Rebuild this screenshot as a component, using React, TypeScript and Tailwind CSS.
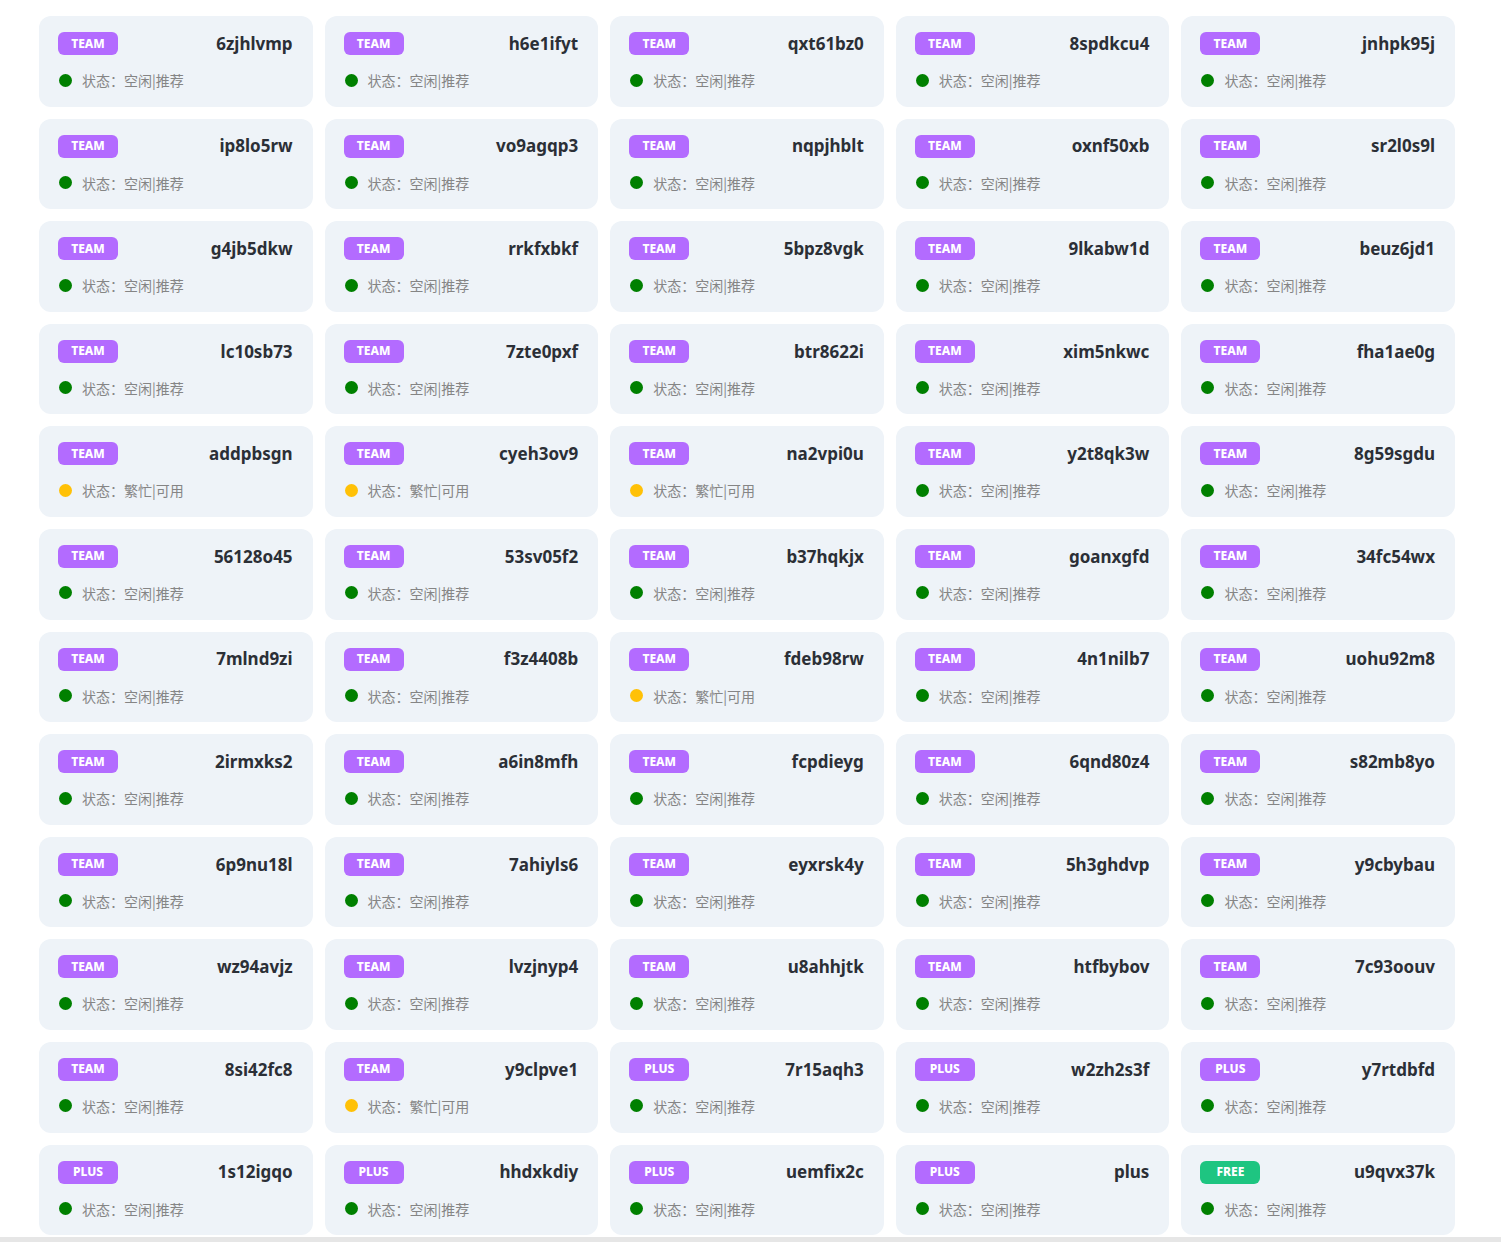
import React from "react";

type Plan = "TEAM" | "PLUS" | "FREE";

interface Account {
  id: string;
  plan: Plan;
  busy?: boolean;
}

const rows: [string, Plan, boolean?][] = [
  ["6zjhlvmp", "TEAM"], ["h6e1ifyt", "TEAM"], ["qxt61bz0", "TEAM"], ["8spdkcu4", "TEAM"], ["jnhpk95j", "TEAM"],
  ["ip8lo5rw", "TEAM"], ["vo9agqp3", "TEAM"], ["nqpjhblt", "TEAM"], ["oxnf50xb", "TEAM"], ["sr2l0s9l", "TEAM"],
  ["g4jb5dkw", "TEAM"], ["rrkfxbkf", "TEAM"], ["5bpz8vgk", "TEAM"], ["9lkabw1d", "TEAM"], ["beuz6jd1", "TEAM"],
  ["lc10sb73", "TEAM"], ["7zte0pxf", "TEAM"], ["btr8622i", "TEAM"], ["xim5nkwc", "TEAM"], ["fha1ae0g", "TEAM"],
  ["addpbsgn", "TEAM", true], ["cyeh3ov9", "TEAM", true], ["na2vpi0u", "TEAM", true], ["y2t8qk3w", "TEAM"], ["8g59sgdu", "TEAM"],
  ["56128o45", "TEAM"], ["53sv05f2", "TEAM"], ["b37hqkjx", "TEAM"], ["goanxgfd", "TEAM"], ["34fc54wx", "TEAM"],
  ["7mlnd9zi", "TEAM"], ["f3z4408b", "TEAM"], ["fdeb98rw", "TEAM", true], ["4n1nilb7", "TEAM"], ["uohu92m8", "TEAM"],
  ["2irmxks2", "TEAM"], ["a6in8mfh", "TEAM"], ["fcpdieyg", "TEAM"], ["6qnd80z4", "TEAM"], ["s82mb8yo", "TEAM"],
  ["6p9nu18l", "TEAM"], ["7ahiyls6", "TEAM"], ["eyxrsk4y", "TEAM"], ["5h3ghdvp", "TEAM"], ["y9cbybau", "TEAM"],
  ["wz94avjz", "TEAM"], ["lvzjnyp4", "TEAM"], ["u8ahhjtk", "TEAM"], ["htfbybov", "TEAM"], ["7c93oouv", "TEAM"],
  ["8si42fc8", "TEAM"], ["y9clpve1", "TEAM", true], ["7r15aqh3", "PLUS"], ["w2zh2s3f", "PLUS"], ["y7rtdbfd", "PLUS"],
  ["1s12igqo", "PLUS"], ["hhdxkdiy", "PLUS"], ["uemfix2c", "PLUS"], ["plus", "PLUS"], ["u9qvx37k", "FREE"],
];

const accounts: Account[] = rows.map(([id, plan, busy]) => ({ id, plan, busy }));

function AccountCard({ account }: { account: Account }) {
  const badge = account.plan === "FREE" ? "bg-[#1ec581]" : "bg-[#b36bff]";
  return (
    <div className="h-[90.6px] rounded-xl bg-[#eef3f8] pl-[19px] pr-5 pt-4">
      <div className="flex h-[23px] items-center justify-between">
        <span
          className={`flex h-[23px] w-[60px] items-center justify-center rounded-md text-[12px] font-extrabold text-white ${badge}`}
        >
          {account.plan}
        </span>
        <span className="text-[17px] font-bold text-[#2b2f36]">{account.id}</span>
      </div>
      <div className="mt-[15px] flex items-center">
        <span
          className={`ml-px h-[13px] w-[13px] rounded-full ${account.busy ? "bg-[#ffc107]" : "bg-[#008000]"}`}
        />
        <span
          className="ml-[10px] text-[14px] leading-5 text-[#858585]"
          style={{ fontFamily: '"Noto Sans CJK SC", sans-serif' }}
        >
          {account.busy ? "状态：繁忙|可用" : "状态：空闲|推荐"}
        </span>
      </div>
    </div>
  );
}

export default function App() {
  return (
    <div
      className="min-h-[1242px] bg-white"
      style={{ fontFamily: '"Noto Sans", "Noto Sans CJK SC", sans-serif' }}
    >
      <div className="ml-[39px] grid w-[1416px] grid-cols-5 gap-x-3 gap-y-3 pt-4">
        {accounts.map((a) => (
          <AccountCard key={a.id} account={a} />
        ))}
      </div>
      <div className="mt-[2px] h-[5px] w-full bg-[#e6e6e6]" />
    </div>
  );
}
